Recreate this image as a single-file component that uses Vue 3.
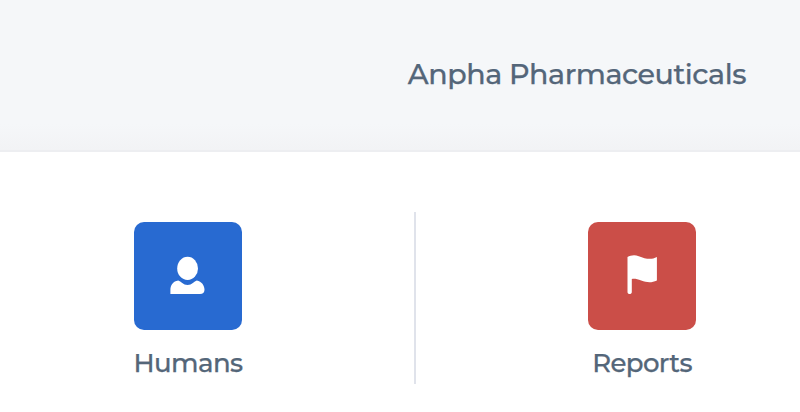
<script setup>
import { ref } from "vue";

const company = ref("Anpha Pharmaceuticals");
const sections = ref([
  { id: "humans", label: "Humans" },
  { id: "reports", label: "Reports" },
]);
</script>
<template>
  <div class="page">
    <header class="header">
      <h1 class="company"><span>{{ company }}</span></h1>
    </header>
    <main class="sections">
      <a v-for="section in sections" :key="section.id" class="section" :class="section.id">
        <div class="tile">
          <svg v-if="section.id === 'humans'" class="icon" viewBox="0 0 56 56">
            <ellipse cx="27.6" cy="20.4" rx="10.4" ry="11.6" />
            <path
              d="M10.4 46V42C10.4 36.8 13.2 33.2 18.2 32.4C21 33.2 23.2 36.9 27.6 36.9C32 36.9 34.2 33.2 36.8 32.4C41.6 33.4 44.5 37.2 44.5 41.8C44.5 44.6 42.9 46 40 46Z"
            />
          </svg>
          <svg v-else class="icon" viewBox="0 0 56 56">
            <path
              d="M13.5 9.1C16.5 7.3 20.6 6.6 24.8 8.2C31.5 10.8 37 12.2 42.9 9V32.4C37.2 35 32.8 34.4 27.2 32.4C23.3 31 20.7 30.4 17.8 30.9V44C17.8 46.8 13.5 46.8 13.5 44Z"
            />
          </svg>
        </div>
        <p class="label"><span>{{ section.label }}</span></p>
      </a>
    </main>
  </div>
</template>
<style>
body {
  margin: 0;
  background-color: #ffffff;
}
</style>
<style scoped>
.page {
  height: 412px;
  overflow: hidden;
  font-family: Montserrat, Inter, "Liberation Sans", sans-serif;
  font-weight: 500;
  color: #546679;
  -webkit-text-stroke: 0.25px #546679;
}

.header {
  box-sizing: border-box;
  height: 152px;
  padding: 56px 54px 0 0;
  background: linear-gradient(#f5f7f9 0, #f5f7f9 124px, #f2f3f5 150px);
  border-bottom: 2px solid #edeef1;
}

.company {
  margin: 0;
  font-size: 28.5px;
  font-weight: 500;
  line-height: 36px;
  letter-spacing: -0.45px;
  text-align: right;
}

.sections {
  display: grid;
  grid-template-columns: 454px 452px;
  margin: 60px 0 0 -38px;
}

.section {
  display: flex;
  flex-direction: column;
  align-items: center;
  box-sizing: border-box;
  height: 172px;
  padding-top: 10px;
}

.humans {
  border-right: 2px solid #e0e3eb;
}

.tile {
  display: flex;
  align-items: center;
  justify-content: center;
  width: 108px;
  height: 108px;
  border-radius: 10px;
  background-color: #286ad1;
}

.reports .tile {
  background-color: #cb4e48;
}

.icon {
  width: 56px;
  height: 56px;
  fill: #ffffff;
}

.label {
  margin: 17px 0 0;
  font-size: 26px;
  line-height: 32px;
  letter-spacing: -0.6px;
}
</style>
